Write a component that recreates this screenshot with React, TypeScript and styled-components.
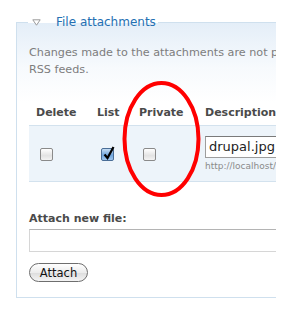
import React from 'react';
import styled, {createGlobalStyle} from 'styled-components';

const GlobalStyle = createGlobalStyle`
  html, body {
    margin: 0;
    padding: 0;
    background: #fff;
  }
  body {
    font-family: "DejaVu Sans", Verdana, sans-serif;
  }
`;

const Frame = styled.div`
  position: relative;
  width: 276px;
  height: 312px;
  overflow: hidden;
  padding: 15px 0 0 16px;
  box-sizing: border-box;
`;

const Fieldset = styled.fieldset`
  width: 900px;
  margin: 0;
  padding: 0 0 15px 12px;
  border: 1px solid #cfe0ee;
  background: linear-gradient(#e4eef8 0, #f7fafd 45px, #fff 80px);
  box-sizing: border-box;
`;

const Legend = styled.legend`
  display: flex;
  align-items: center;
  gap: 15px;
  margin-left: -1px;
  padding: 0 2px 0 4px;
  font-size: 12px;
  line-height: 15px;
  color: #2470b3;
`;

const Intro = styled.p`
  margin: 14px 0 0;
  font-size: 11.2px;
  line-height: 17px;
  color: #7d7d7d;
  white-space: nowrap;
`;

const Table = styled.table`
  margin-top: 21px;
  border-collapse: collapse;
  font-size: 11px;
`;

const Th = styled.th<{$w: number}>`
  width: ${p => p.$w}px;
  box-sizing: border-box;
  padding: 7px 7px 6px;
  text-align: left;
  font-weight: bold;
  color: #4a4a4a;
  border-bottom: 1px solid #d3e2ee;
`;

const Row = styled.tr`
  background: #edf4fa;
  border-bottom: 1px solid #d3e2ee;
`;

const Td = styled.td`
  padding: 0 7px;
  height: 55px;
  vertical-align: middle;
`;

const Box = styled.span<{$on?: boolean}>`
  display: block;
  width: 11px;
  height: 11px;
  margin-left: 4px;
  margin-top: 2px;
  border: 1px solid ${p => (p.$on ? '#4a6d96' : '#8a8a8a')};
  border-radius: 2px;
  position: relative;
  background: ${p =>
    p.$on
      ? 'linear-gradient(#c6ddf4, #6ea4dc 55%, #9ec6ef)'
      : 'linear-gradient(#ffffff, #e3e3e3 60%, #f3f3f3)'};
  svg {
    position: absolute;
    left: 1px;
    top: -3px;
  }
`;

const DescInput = styled.div`
  width: 120px;
  height: 22px;
  box-sizing: border-box;
  border: 1px solid #9d9d9d;
  border-top-color: #7a7a7a;
  background: #fff;
  padding: 2px 3px;
  font-size: 13px;
  line-height: 16px;
  color: #222;
`;

const Url = styled.div`
  margin-top: 3px;
  font-size: 9px;
  color: #8a8a8a;
`;

const Label = styled.div`
  margin-top: 30px;
  font-size: 11px;
  font-weight: bold;
  color: #4a4a4a;
`;

const FileInput = styled.div`
  margin-top: 4px;
  width: 300px;
  height: 23px;
  box-sizing: border-box;
  border: 1px solid #d6d6d6;
  border-top-color: #b4b4b4;
  background: #fff;
`;

const Button = styled.button`
  display: block;
  margin-top: 11px;
  height: 19px;
  width: 59px;
  padding: 0;
  border: 1px solid #6e6e6e;
  border-radius: 10px;
  background: linear-gradient(#ffffff, #ececec 50%, #dcdcdc 51%, #f4f4f4);
  font-family: "DejaVu Sans", sans-serif;
  font-size: 11.5px;
  color: #111;
`;

const Ring = styled.svg`
  position: absolute;
  left: 0;
  top: 0;
  pointer-events: none;
`;

function Check({on}: {on?: boolean}) {
  return (
    <Box $on={on}>
      {on && (
        <svg width="12" height="14" viewBox="0 0 12 14">
          <path d="M1.5 8.5 L4.5 12 L10.5 1" fill="none" stroke="#000" strokeWidth="2.2"/>
        </svg>
      )}
    </Box>
  );
}

export default function App() {
  return (
    <>
      <GlobalStyle/>
      <Frame>
        <Fieldset>
          <Legend>
            <svg width="9" height="7" viewBox="0 0 9 7">
              <path d="M0.8 0.8 H8.2 L4.5 6.2 Z" fill="#fff" stroke="#9a9a9a" strokeWidth="1"/>
            </svg>
            File attachments
          </Legend>
          <Intro>
            Changes made to the attachments are not permanent until you save this post. The first "listed" file will be included in<br/>
            RSS feeds.
          </Intro>
          <Table>
            <thead>
              <tr>
                <Th $w={61}>Delete</Th>
                <Th $w={42}>List</Th>
                <Th $w={66}>Private</Th>
                <Th $w={140}>Description</Th>
              </tr>
            </thead>
            <tbody>
              <Row>
                <Td><Check/></Td>
                <Td><Check on/></Td>
                <Td><Check/></Td>
                <Td>
                  <DescInput>drupal.jpg</DescInput>
                  <Url>http://localhost/files/drupal.jpg</Url>
                </Td>
              </Row>
            </tbody>
          </Table>
          <Label>Attach new file:</Label>
          <FileInput/>
          <Button>Attach</Button>
        </Fieldset>
        <Ring width="276" height="312">
          <ellipse cx="161.5" cy="139" rx="37" ry="56" fill="none" stroke="#ff0000" strokeWidth="4"/>
        </Ring>
      </Frame>
    </>
  );
}
